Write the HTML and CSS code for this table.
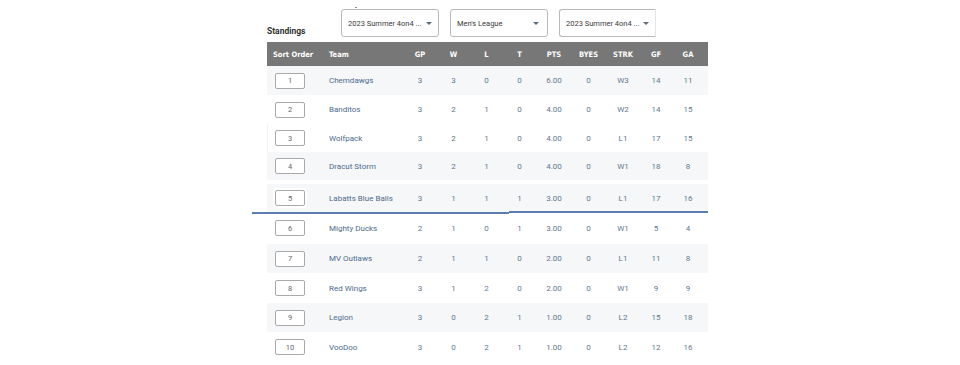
FILE: index.html
```html
<!DOCTYPE html>
<html>
<head>
<meta charset="utf-8">
<link rel="stylesheet" href="styles.css">
</head>
<body>
<div class="page">
  <div class="toolbar">
    <div class="title">Standings</div>
    <div class="filters">
      <div class="select first"><span class="tick"></span><span class="label">2023 Summer 4on4 ...</span><span class="caret"></span></div>
      <div class="select"><span class="label">Men's League</span><span class="caret"></span></div>
      <div class="select cut"><span class="label">2023 Summer 4on4 ...</span><span class="caret"></span></div>
    </div>
  </div>
  <div class="table">
    <div class="row head">
      <div class="c sort">Sort Order</div><div class="c team">Team</div>
      <div class="c n">GP</div><div class="c n">W</div><div class="c n">L</div><div class="c n">T</div>
      <div class="c n">PTS</div><div class="c n">BYES</div><div class="c n">STRK</div><div class="c n">GF</div><div class="c n">GA</div><div></div>
    </div>
    <div class="row alt h29">
      <div class="c sort"><span class="box">1</span></div><div class="c team">Chemdawgs</div>
      <div class="c n">3</div><div class="c n">3</div><div class="c n">0</div><div class="c n">0</div><div class="c n">6.00</div><div class="c n">0</div><div class="c n">W3</div><div class="c n">14</div><div class="c n">11</div><div></div>
    </div>
    <div class="row h29">
      <div class="c sort"><span class="box">2</span></div><div class="c team">Banditos</div>
      <div class="c n">3</div><div class="c n">2</div><div class="c n">1</div><div class="c n">0</div><div class="c n">4.00</div><div class="c n">0</div><div class="c n">W2</div><div class="c n">14</div><div class="c n">15</div><div></div>
    </div>
    <div class="row h28 edge">
      <div class="c sort"><span class="box">3</span></div><div class="c team">Wolfpack</div>
      <div class="c n">3</div><div class="c n">2</div><div class="c n">1</div><div class="c n">0</div><div class="c n">4.00</div><div class="c n">0</div><div class="c n">L1</div><div class="c n">17</div><div class="c n">15</div><div></div>
    </div>
    <div class="row alt h28 gapafter">
      <div class="c sort"><span class="box">4</span></div><div class="c team">Dracut Storm</div>
      <div class="c n">3</div><div class="c n">2</div><div class="c n">1</div><div class="c n">0</div><div class="c n">4.00</div><div class="c n">0</div><div class="c n">W1</div><div class="c n">18</div><div class="c n">8</div><div></div>
    </div>
    <div class="row alt h28 dragged">
      <div class="c sort"><span class="box">5</span></div><div class="c team">Labatts Blue Balls</div>
      <div class="c n">3</div><div class="c n">1</div><div class="c n">1</div><div class="c n">1</div><div class="c n">3.00</div><div class="c n">0</div><div class="c n">L1</div><div class="c n">17</div><div class="c n">16</div><div></div>
      <div class="dropline"><span class="s1"></span><span class="s2"></span><span class="s3"></span><span class="s4"></span></div>
    </div>
    <div class="row h32">
      <div class="c sort"><span class="box">6</span></div><div class="c team">Mighty Ducks</div>
      <div class="c n">2</div><div class="c n">1</div><div class="c n">0</div><div class="c n">1</div><div class="c n">3.00</div><div class="c n">0</div><div class="c n">W1</div><div class="c n">5</div><div class="c n">4</div><div></div>
    </div>
    <div class="row alt h29">
      <div class="c sort"><span class="box">7</span></div><div class="c team">MV Outlaws</div>
      <div class="c n">2</div><div class="c n">1</div><div class="c n">1</div><div class="c n">0</div><div class="c n">2.00</div><div class="c n">0</div><div class="c n">L1</div><div class="c n">11</div><div class="c n">8</div><div></div>
    </div>
    <div class="row h30">
      <div class="c sort"><span class="box">8</span></div><div class="c team">Red Wings</div>
      <div class="c n">3</div><div class="c n">1</div><div class="c n">2</div><div class="c n">0</div><div class="c n">2.00</div><div class="c n">0</div><div class="c n">W1</div><div class="c n">9</div><div class="c n">9</div><div></div>
    </div>
    <div class="row alt h29">
      <div class="c sort"><span class="box">9</span></div><div class="c team">Legion</div>
      <div class="c n">3</div><div class="c n">0</div><div class="c n">2</div><div class="c n">1</div><div class="c n">1.00</div><div class="c n">0</div><div class="c n">L2</div><div class="c n">15</div><div class="c n">18</div><div></div>
    </div>
    <div class="row h30">
      <div class="c sort"><span class="box">10</span></div><div class="c team">VooDoo</div>
      <div class="c n">3</div><div class="c n">0</div><div class="c n">2</div><div class="c n">1</div><div class="c n">1.00</div><div class="c n">0</div><div class="c n">L2</div><div class="c n">12</div><div class="c n">16</div><div></div>
    </div>
  </div>
</div>
</body>
</html>
```

FILE: styles.css
```css
html, body {
  margin: 0;
  padding: 0;
  background: #ffffff;
}
body {
  font-family: Roboto, "Liberation Sans", Arial, sans-serif;
  overflow: hidden;
  width: 960px;
  height: 365px;
}
.page {
  width: 441px;
  margin-left: 267px;
  padding-top: 9px;
}
.toolbar {
  display: flex;
  align-items: flex-end;
  height: 28px;
}
.title {
  width: 74px;
  font-weight: bold;
  font-size: 8.5px;
  color: #333333;
  padding-bottom: 1px;
  line-height: 10px;
}
.filters {
  display: flex;
  gap: 11px;
}
.select {
  position: relative;
  box-sizing: border-box;
  width: 98px;
  height: 28px;
  border: 1px solid #b9b9b9;
  border-radius: 3px;
  display: flex;
  align-items: center;
  padding-left: 6px;
  font-size: 7.5px;
  color: #3a3a3a;
}
.select.cut {
  width: 97px;
  border-right-color: #e4e4e4;
  border-radius: 3px 0 0 3px;
}
.select .label {
  flex: 1;
  white-space: nowrap;
}
.caret {
  width: 0;
  height: 0;
  border-left: 3px solid transparent;
  border-right: 3px solid transparent;
  border-top: 3px solid #5f6b78;
  margin-right: 6px;
  margin-left: 1px;
}
.select:not(.first):not(.cut) .caret {
  margin-right: 8px;
}
.tick {
  position: absolute;
  left: 13px;
  top: -3px;
  width: 2px;
  height: 1px;
  background: #888;
}
.table {
  margin-top: 5px;
}
.row {
  display: grid;
  grid-template-columns: 55px 81px 34px 33px 33px 33px 36px 33px 36px 30px 34px 3px;
  align-items: center;
  position: relative;
  font-size: 8px;
  color: #62778f;
}
.row.head {
  height: 24px;
  background: #777777;
  font-family: "Liberation Sans Narrow", "DejaVu Sans Condensed", "Roboto", sans-serif;
  font-weight: bold;
  font-size: 7.5px;
}
.row.head .c {
  color: #ffffff;
}
.row.head .sort {
  padding-left: 6px;
  justify-content: flex-start;
}
.row.alt {
  background: #f5f7f9;
}
.h28 { height: 28px; }
.h29 { height: 29px; }
.h30 { height: 30px; }
.h32 { height: 32px; }
.gapafter { margin-bottom: 4px; }
.edge {
  box-shadow: inset 1px 0 0 #f0f2f4;
}
.c {
  white-space: nowrap;
}
.c.n {
  text-align: center;
}
.c.team {
  padding-left: 7px;
  color: #4d6a8b;
}
.c.sort {
  display: flex;
  padding-left: 8px;
}
.box {
  box-sizing: border-box;
  width: 30px;
  height: 16px;
  border: 1px solid #a9a9a9;
  border-radius: 2px;
  background: #ffffff;
  display: flex;
  align-items: center;
  justify-content: center;
  color: #666666;
  font-size: 7.5px;
}
.dragged .c.sort .box {
  box-shadow: 0 0 0 2px #ffffff;
}
.dropline {
  position: absolute;
  left: -15px;
  right: 0;
  top: 27px;
  height: 3px;
  display: flex;
  align-items: flex-start;
}
.dropline span {
  height: 2px;
  background: #5b7db0;
}
.dropline .s1 { width: 140px; margin-top: 1px; }
.dropline .s2 { width: 117px; margin-top: 0.5px; }
.dropline .s3 { width: 117px; margin-top: 0; }
.dropline .s4 { flex: 1; margin-top: 0; }
```
